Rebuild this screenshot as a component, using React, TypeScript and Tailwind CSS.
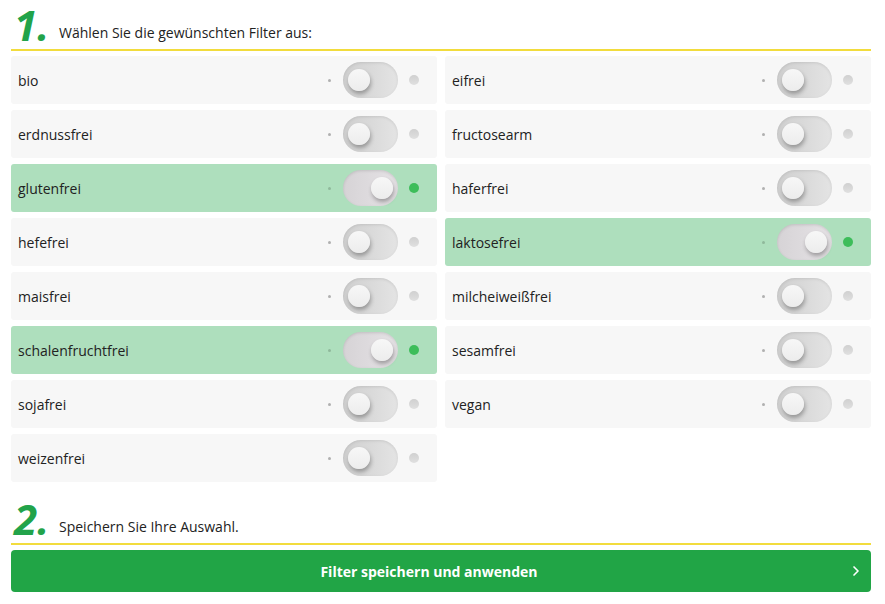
import {ChevronRight} from 'lucide-react';

const filters = [
  {name: 'bio', on: false},
  {name: 'eifrei', on: false},
  {name: 'erdnussfrei', on: false},
  {name: 'fructosearm', on: false},
  {name: 'glutenfrei', on: true},
  {name: 'haferfrei', on: false},
  {name: 'hefefrei', on: false},
  {name: 'laktosefrei', on: true},
  {name: 'maisfrei', on: false},
  {name: 'milcheiweißfrei', on: false},
  {name: 'schalenfruchtfrei', on: true},
  {name: 'sesamfrei', on: false},
  {name: 'sojafrei', on: false},
  {name: 'vegan', on: false},
  {name: 'weizenfrei', on: false},
];

function StepHeader({step, text}: {step: string; text: string}) {
  return (
    <div className="flex items-end border-b-2 border-[#f2dc3d] pb-[6px]">
      <span className="-mb-[2px] w-[48px] pl-[3px] pr-[4px] text-[42px] leading-[40px] font-bold italic text-[#22a34a]">
        {step}
      </span>
      <span className="text-[14px] leading-[20px] text-[#222]">{text}</span>
    </div>
  );
}

function Toggle({on}: {on: boolean}) {
  return (
    <div className="flex items-center">
      <span className={`size-[3px] rounded-full ${on ? 'bg-[#8fb99b]' : 'bg-[#b0b0b0]'}`} />
      <div
        className={`ml-[12px] flex h-[36px] w-[55px] items-center rounded-full px-[5px] ${
          on
            ? 'justify-end bg-gradient-to-r from-[#d6d3d6] to-[#e6e3e6] shadow-[inset_0_1px_3px_rgba(0,0,0,0.12)]'
            : 'justify-start bg-gradient-to-r from-[#cfcfcf] to-[#e4e4e4] shadow-[inset_0_1px_3px_rgba(0,0,0,0.1)]'
        }`}
      >
        <span className="size-[22px] rounded-full bg-gradient-to-b from-[#f7f7f7] to-[#ececec] shadow-[1px_3px_4px_rgba(0,0,0,0.3)]" />
      </div>
      <span
        className={`ml-[11px] size-[10px] rounded-full ${
          on ? 'bg-[#3dbd5a]' : 'bg-gradient-to-b from-[#d0d0d0] to-[#e0e0e0]'
        }`}
      />
    </div>
  );
}

export default function App() {
  return (
    <div className="min-h-[604px] bg-white font-['Open_Sans',sans-serif]">
      <div className="ml-[11px] w-[860px] pt-[5px]">
        <StepHeader step="1." text="Wählen Sie die gewünschten Filter aus:" />
        <div className="mt-[5px] grid grid-cols-2 gap-x-[8px] gap-y-[6px]">
          {filters.map((f) => (
            <div
              key={f.name}
              className={`flex h-[48px] items-center justify-between rounded-[3px] pl-[7px] pr-[18px] ${
                f.on ? 'bg-[#aedfbd]' : 'bg-[#f7f7f7]'
              }`}
            >
              <span className="text-[14px] text-[#222]">{f.name}</span>
              <Toggle on={f.on} />
            </div>
          ))}
        </div>
        <div className="mt-[17px]">
          <StepHeader step="2." text="Speichern Sie Ihre Auswahl." />
        </div>
        <button className="relative mt-[5px] flex h-[42px] w-full items-center justify-center rounded-[4px] bg-[#21a546] pr-[24px] text-[14px] font-bold text-white">
          Filter speichern und anwenden
          <ChevronRight className="absolute right-[7px] size-[16px]" strokeWidth={2.5} />
        </button>
      </div>
    </div>
  );
}
